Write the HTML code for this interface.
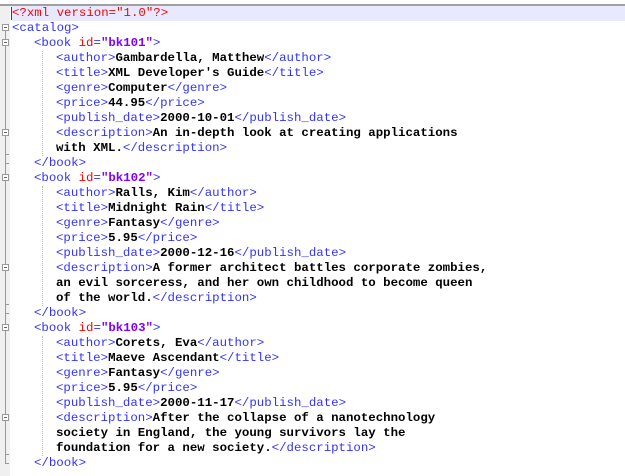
<!DOCTYPE html>
<html><head><style>
body{margin:0;width:625px;height:476px;background:#fff;position:relative;overflow:hidden;font-family:"Liberation Mono",monospace;font-size:12.4px}
.top{position:absolute;left:0;top:4px;width:625px;height:2px;background:#a0a0a0}
.hl{position:absolute;left:11px;top:6px;width:614px;height:15px;background:#e8e8ff}
.mar{position:absolute;left:0;top:6px;width:10px;height:470px;background:#f0f0f0}
.caret{position:absolute;left:11px;top:7px;width:1px;height:13px;background:#8000ff}
.fl{position:absolute;left:5px;width:1px;background:#999}
.bx{position:absolute;left:2px;width:7px;height:7px;border:1px solid #999;background:#fff;box-sizing:border-box}
.bx:after{content:"";position:absolute;left:1px;top:2px;width:3px;height:1px;background:#666}
.tk{position:absolute;left:5px;width:4px;height:1px;background:#999}
.ig{position:absolute;left:42px;width:0;border-left:1px dotted #bbb}
.l{position:absolute;height:15px;line-height:15px;white-space:pre}
.t{color:#3333ff}.a{color:#ff0000}.v{color:#8000ff;font-weight:bold}.x{color:#000;font-weight:bold}.d{color:#ff0000}
</style></head><body>
<div class="top"></div><div class="mar"></div><div class="hl"></div><div class="caret"></div>
<div class="fl" style="top:28px;height:436px"></div>
<div class="bx" style="top:24px"></div><div class="bx" style="top:39px"></div>
<div class="bx" style="top:129px"></div><div class="tk" style="top:154px"></div><div class="tk" style="top:163px"></div>
<div class="bx" style="top:174px"></div><div class="bx" style="top:264px"></div><div class="tk" style="top:304px"></div><div class="tk" style="top:313px"></div>
<div class="bx" style="top:324px"></div><div class="bx" style="top:414px"></div><div class="tk" style="top:454px"></div><div class="tk" style="top:463px"></div>
<div class="ig" style="top:51px;height:105px"></div>
<div class="ig" style="top:186px;height:120px"></div>
<div class="ig" style="top:336px;height:120px"></div>

<div class="l" style="left:12px;top:6px"><span class="d">&lt;?xml version="1.0"?&gt;</span></div>
<div class="l" style="left:12px;top:21px"><span class="t">&lt;catalog&gt;</span></div>
<div class="l" style="left:34px;top:36px"><span class="t">&lt;book </span><span class="a">id</span><span class="t">=</span><span class="v">"bk101"</span><span class="t">&gt;</span></div>
<div class="l" style="left:56px;top:51px"><span class="t">&lt;author&gt;</span><span class="x">Gambardella, Matthew</span><span class="t">&lt;/author&gt;</span></div>
<div class="l" style="left:56px;top:66px"><span class="t">&lt;title&gt;</span><span class="x">XML Developer's Guide</span><span class="t">&lt;/title&gt;</span></div>
<div class="l" style="left:56px;top:81px"><span class="t">&lt;genre&gt;</span><span class="x">Computer</span><span class="t">&lt;/genre&gt;</span></div>
<div class="l" style="left:56px;top:96px"><span class="t">&lt;price&gt;</span><span class="x">44.95</span><span class="t">&lt;/price&gt;</span></div>
<div class="l" style="left:56px;top:111px"><span class="t">&lt;publish_date&gt;</span><span class="x">2000-10-01</span><span class="t">&lt;/publish_date&gt;</span></div>
<div class="l" style="left:56px;top:126px"><span class="t">&lt;description&gt;</span><span class="x">An in-depth look at creating applications</span></div>
<div class="l" style="left:56px;top:141px"><span class="x">with XML.</span><span class="t">&lt;/description&gt;</span></div>
<div class="l" style="left:34px;top:156px"><span class="t">&lt;/book&gt;</span></div>
<div class="l" style="left:34px;top:171px"><span class="t">&lt;book </span><span class="a">id</span><span class="t">=</span><span class="v">"bk102"</span><span class="t">&gt;</span></div>
<div class="l" style="left:56px;top:186px"><span class="t">&lt;author&gt;</span><span class="x">Ralls, Kim</span><span class="t">&lt;/author&gt;</span></div>
<div class="l" style="left:56px;top:201px"><span class="t">&lt;title&gt;</span><span class="x">Midnight Rain</span><span class="t">&lt;/title&gt;</span></div>
<div class="l" style="left:56px;top:216px"><span class="t">&lt;genre&gt;</span><span class="x">Fantasy</span><span class="t">&lt;/genre&gt;</span></div>
<div class="l" style="left:56px;top:231px"><span class="t">&lt;price&gt;</span><span class="x">5.95</span><span class="t">&lt;/price&gt;</span></div>
<div class="l" style="left:56px;top:246px"><span class="t">&lt;publish_date&gt;</span><span class="x">2000-12-16</span><span class="t">&lt;/publish_date&gt;</span></div>
<div class="l" style="left:56px;top:261px"><span class="t">&lt;description&gt;</span><span class="x">A former architect battles corporate zombies,</span></div>
<div class="l" style="left:56px;top:276px"><span class="x">an evil sorceress, and her own childhood to become queen</span></div>
<div class="l" style="left:56px;top:291px"><span class="x">of the world.</span><span class="t">&lt;/description&gt;</span></div>
<div class="l" style="left:34px;top:306px"><span class="t">&lt;/book&gt;</span></div>
<div class="l" style="left:34px;top:321px"><span class="t">&lt;book </span><span class="a">id</span><span class="t">=</span><span class="v">"bk103"</span><span class="t">&gt;</span></div>
<div class="l" style="left:56px;top:336px"><span class="t">&lt;author&gt;</span><span class="x">Corets, Eva</span><span class="t">&lt;/author&gt;</span></div>
<div class="l" style="left:56px;top:351px"><span class="t">&lt;title&gt;</span><span class="x">Maeve Ascendant</span><span class="t">&lt;/title&gt;</span></div>
<div class="l" style="left:56px;top:366px"><span class="t">&lt;genre&gt;</span><span class="x">Fantasy</span><span class="t">&lt;/genre&gt;</span></div>
<div class="l" style="left:56px;top:381px"><span class="t">&lt;price&gt;</span><span class="x">5.95</span><span class="t">&lt;/price&gt;</span></div>
<div class="l" style="left:56px;top:396px"><span class="t">&lt;publish_date&gt;</span><span class="x">2000-11-17</span><span class="t">&lt;/publish_date&gt;</span></div>
<div class="l" style="left:56px;top:411px"><span class="t">&lt;description&gt;</span><span class="x">After the collapse of a nanotechnology</span></div>
<div class="l" style="left:56px;top:426px"><span class="x">society in England, the young survivors lay the</span></div>
<div class="l" style="left:56px;top:441px"><span class="x">foundation for a new society.</span><span class="t">&lt;/description&gt;</span></div>
<div class="l" style="left:34px;top:456px"><span class="t">&lt;/book&gt;</span></div>
</body></html>
